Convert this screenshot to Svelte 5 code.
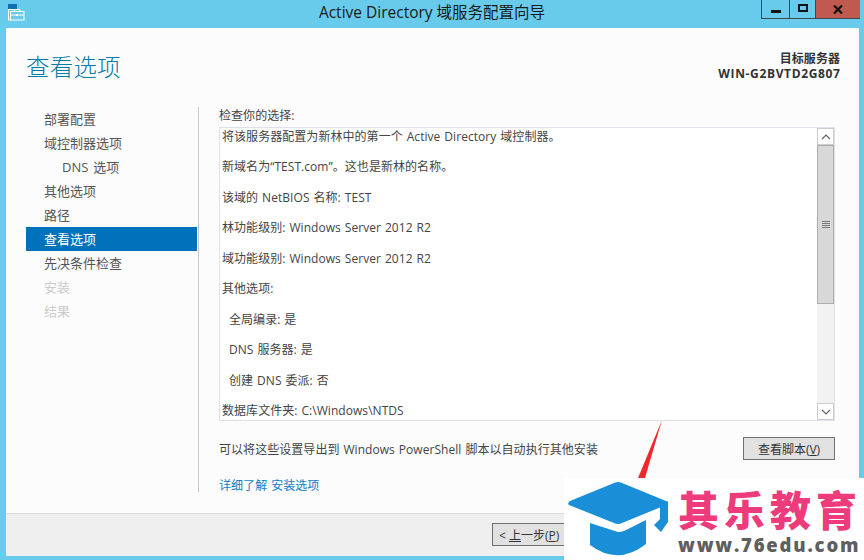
<script>
  const steps = [
    { t: '部署配置' }, { t: '域控制器选项' }, { t: 'DNS 选项', sub: true }, { t: '其他选项' }, { t: '路径' },
    { t: '查看选项', on: true }, { t: '先决条件检查' }, { t: '安装', off: true }, { t: '结果', off: true }
  ];
  const lines = [
    { t: '将该服务器配置为新林中的第一个 Active Directory 域控制器。' },
    { t: '新域名为“TEST.com”。这也是新林的名称。' },
    { t: '该域的 NetBIOS 名称: TEST' },
    { t: '林功能级别: Windows Server 2012 R2' },
    { t: '域功能级别: Windows Server 2012 R2' },
    { t: '其他选项:' },
    { t: '全局编录: 是', sub: true },
    { t: 'DNS 服务器: 是', sub: true },
    { t: '创建 DNS 委派: 否', sub: true },
    { t: '数据库文件夹: C:\\Windows\\NTDS' }
  ];
</script>

<div class="win">
  <header class="title">
    <svg class="appicon" width="17" height="17" viewBox="0 0 17 17" aria-hidden="true">
      <rect x="0" y="0" width="9" height="5" fill="#0f6fb5"/>
      <path d="M.5 5v11M9 5.500H.500M.5 16H3" fill="none" stroke="#fff"/>
      <rect x="2.500" y="7.500" width="13.500" height="8.500" fill="#69cbec" stroke="#fff"/>
      <path d="M6.500 7.500V5.500h5.500v2M2.500 11h13.500" fill="none" stroke="#fff"/>
      <rect x="8" y="10" width="2" height="2" fill="#fff"/>
    </svg>
    <span class="ttext">Active Directory 域服务配置向导</span>
    <div class="ctrls">
      <div class="ctrl c1"><i class="min"></i></div>
      <div class="ctrl c2"><i class="max"></i></div>
      <div class="ctrl c3">
        <svg width="10" height="9" viewBox="0 0 10 9" aria-hidden="true"><path d="M1 .5 9 8.500M9 .5 1 8.500" stroke="#111" stroke-width="2.200"/></svg>
      </div>
    </div>
  </header>

  <main class="body">
    <div class="head">
      <h1>查看选项</h1>
      <div class="server"><div>目标服务器</div><div class="sname">WIN-G2BVTD2G807</div></div>
    </div>
    <div class="cols">
      <nav class="nav">
        {#each steps as s}
          <div class="step" class:sub={s.sub} class:on={s.on} class:off={s.off}>{s.t}</div>
        {/each}
      </nav>
      <section class="pane">
        <div class="lbl">检查你的选择:</div>
        <div class="box">
          <div class="lines">
            {#each lines as l}
              <div class="line" class:sub={l.sub}>{l.t}</div>
            {/each}
          </div>
          <div class="sb">
            <div class="arrow">
              <svg width="10" height="6" viewBox="0 0 10 6" aria-hidden="true"><path d="M1 5 5 1l4 4" fill="none" stroke="#666" stroke-width="1.200"/></svg>
            </div>
            <div class="track">
              <div class="thumb"><i></i><i></i><i></i><i></i></div>
            </div>
            <div class="arrow">
              <svg width="10" height="6" viewBox="0 0 10 6" aria-hidden="true"><path d="M1 1l4 4 4-4" fill="none" stroke="#666" stroke-width="1.200"/></svg>
            </div>
          </div>
        </div>
        <div class="export">
          <span>可以将这些设置导出到 Windows PowerShell 脚本以自动执行其他安装</span>
          <button class="btn script">查看脚本(<u>V</u>)</button>
        </div>
        <a class="link" href="#more">详细了解 安装选项</a>
      </section>
    </div>
    <footer class="foot">
      <button class="btn back">&lt; <u>上</u>一步(<u>P</u>)</button>
    </footer>
  </main>

  <svg class="arrowmark" width="30" height="60" viewBox="0 0 30 60" aria-hidden="true">
    <path d="M27 0 3 58h7Z" fill="#f0282d"/>
  </svg>

  <div class="wm">
    <svg class="cap" width="108" height="82" viewBox="0 0 108 82" aria-hidden="true">
      <path d="M26 45 54 54Q57 54 60 53L82 42V66Q54 88 26 67Z" fill="#1a8fd8"/>
      <path d="M5 27Q3 25 6 23L50 5Q54 3 58 5L102 23Q105 25 102 27L58 45Q54 47 50 45Z" fill="#1a8fd8"/>
      <path d="M96 26 104 23V44L97 54 90 47 96 41Z" fill="#1a8fd8"/>
    </svg>
    <div class="wmtext">
      <div class="wmcn">其乐教育</div>
      <div class="wmen">www.76edu.com</div>
    </div>
  </div>
</div>

<style>
  :global(body) { margin: 0; }
  .win {
    position: relative; width: 864px; height: 560px; overflow: hidden;
    background: #69cbec; display: flex; flex-direction: column;
    font-family: "Open Sans", "Noto Sans CJK SC", sans-serif; font-size: 12px; color: #444;
    letter-spacing: 0.050px; word-spacing: 0.800px;
  }
  .title { height: 27px; flex: none; display: flex; align-items: flex-start; justify-content: center; position: relative; }
  .appicon { position: absolute; left: 8px; top: 4px; }
  .ttext { font-size: 15.500px; line-height: 25px; color: #1a1a1a; letter-spacing: 0; word-spacing: 0; }
  .ctrls { position: absolute; right: 4px; top: 0; display: flex; height: 18px; border-left: 1px solid #3c4a50; border-bottom: 1px solid #3c4a50; }
  .ctrl { display: flex; align-items: center; justify-content: center; height: 18px; }
  .c1 { width: 27px; border-right: 1px solid #3c4a50; }
  .c2 { width: 25px; border-right: 1px solid #3c4a50; }
  .c3 { width: 44px; background: #c05a50; }
  .min { display: block; width: 10px; height: 3px; background: #111; margin-top: 5px; }
  .max { display: block; width: 6px; height: 4px; border: 2px solid #111; margin-top: -3px; }

  .body { margin: 1px 5px 4px 6px; flex: 1; background: #fcfcfc; display: flex; flex-direction: column; min-height: 0; }
  .head { height: 72px; flex: none; display: flex; justify-content: space-between; padding: 0 19px 0 20px; }
  h1 { margin: 21px 0 0; font-weight: 300; font-size: 23.500px; line-height: 34px; color: #007ba6; letter-spacing: 0.200px; font-family: "Noto Sans CJK SC", sans-serif; }
  .server { margin-top: 23px; text-align: right; font-weight: 700; font-size: 12px; line-height: 15px; color: #333; }
  .sname { letter-spacing: 0.650px; margin-right: -0.650px; }
  .cols { flex: 1; display: flex; min-height: 0; padding-left: 20px; }
  .nav { width: 171px; flex: none; padding-top: 7px; margin-right: 1px; }
  .step { height: 24px; line-height: 24px; padding-left: 18px; font-size: 13px; color: #555; white-space: nowrap; word-spacing: 1.500px; letter-spacing: 0; }
  .step.sub { padding-left: 36px; }
  .step.on { background: #0072bc; color: #fff; }
  .step.off { color: #ccc; }
  .pane { width: 616px; height: 385px; margin-top: 7px; border-left: 1px solid #c8c8c8; padding-left: 20px; box-sizing: border-box; flex: none; }
  .lbl { font-size: 12px; line-height: 16px; height: 20px; padding-top: 1px; box-sizing: border-box; white-space: nowrap; }
  .box { width: 616px; height: 294px; box-sizing: border-box; border: 1px solid #e0e0ea; background: #fff; display: flex; }
  .lines { flex: 1; padding: 1px 0 0 2px; overflow: hidden; }
  .line { height: 30.450px; line-height: 16px; white-space: nowrap; }
  .line.sub { padding-left: 7px; }
  .sb { width: 17px; flex: none; display: flex; flex-direction: column; }
  .arrow { height: 17px; flex: none; background: #fff; border: 1px solid #ccc; box-sizing: border-box; display: flex; align-items: center; justify-content: center; }
  .track { flex: 1; background: #f2f2f2; }
  .thumb { height: 159px; background: #d8d8d8; border: 1px solid #adadad; box-sizing: border-box; display: flex; flex-direction: column; align-items: center; justify-content: center; gap: 1px; }
  .thumb i { display: block; width: 8px; height: 1px; background: #777; }
  .export { display: flex; justify-content: space-between; align-items: center; margin-top: 16px; width: 616px; white-space: nowrap; }
  .btn { font: inherit; color: #333; background: #e1e1e1; border: 1px solid #707070; padding: 0; height: 23px; font-size: 12px; }
  .script { width: 92px; }
  .link { display: block; margin-top: 18px; color: #0f7cc8; text-decoration: none; line-height: 16px; }
  .foot { height: 33px; flex: none; background: #efefef; border-top: 1px solid #dcdcdc; padding: 9px 0 0 486px; }
  .back { width: 100px; display: block; text-align: left; padding-left: 6px; }
  .arrowmark { position: absolute; left: 635px; top: 420px; }
  .wm { position: absolute; left: 564px; top: 478px; width: 300px; height: 82px; background: #fff; letter-spacing: 0; word-spacing: 0; }
  .cap { position: absolute; left: 0; top: 0; }
  .wmtext { position: absolute; left: 114px; top: 8px; }
  .wmcn { font-family: "Noto Sans CJK SC", sans-serif; font-weight: 900; font-size: 41px; line-height: 44px; height: 44px; letter-spacing: 5px; color: #ee3b7b; white-space: nowrap; }
  .wmen { font-family: "Open Sans", sans-serif; font-weight: 800; font-size: 18.500px; line-height: 22px; letter-spacing: 1.800px; color: #5f5f5f; white-space: nowrap; margin-top: 4px; }
</style>
